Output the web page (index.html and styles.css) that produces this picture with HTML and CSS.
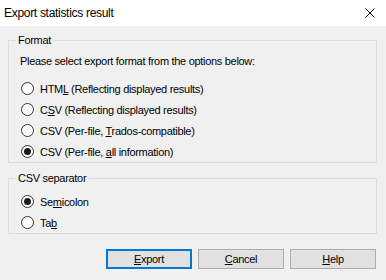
FILE: index.html
```html
<!DOCTYPE html>
<html lang="en">
<head>
    <meta charset="UTF-8">
    <title>Export statistics result</title>
    <link rel="stylesheet" href="styles.css">
</head>
<body>
    <div class="dialog">
        <div class="titlebar">
            <span class="title">Export statistics result</span>
            <svg class="close" width="10" height="10" viewBox="0 0 10 10">
                <path d="M0.5 0.5 L9.5 9.5 M9.5 0.5 L0.5 9.5" stroke="#000" stroke-width="1" fill="none"/>
            </svg>
        </div>

        <div class="content">
            <fieldset class="group format">
                <legend>Format</legend>
                <p class="hint">Please select export format from the options below:</p>
                <label class="option"><span class="radio"></span><span>HTM<u>L</u> (Reflecting displayed results)</span></label>
                <label class="option"><span class="radio"></span><span>C<u>S</u>V (Reflecting displayed results)</span></label>
                <label class="option"><span class="radio"></span><span>CSV (Per-file, <u>T</u>rados-compatible)</span></label>
                <label class="option"><span class="radio checked"></span><span>CSV (Per-file, <u>a</u>ll information)</span></label>
            </fieldset>

            <fieldset class="group separator">
                <legend>CSV separator</legend>
                <label class="option"><span class="radio checked"></span><span>Se<u>m</u>icolon</span></label>
                <label class="option"><span class="radio"></span><span>Ta<u>b</u></span></label>
            </fieldset>

            <div class="buttons">
                <button class="btn default"><u>E</u>xport</button>
                <button class="btn"><u>C</u>ancel</button>
                <button class="btn"><u>H</u>elp</button>
            </div>
        </div>
    </div>
</body>
</html>
```

FILE: styles.css
```css
body {
    margin: 0;
    font-family: "Liberation Sans", Arial, sans-serif;
    font-size: 11px;
    letter-spacing: -0.3px;
    color: #000;
    background: #f0f0f0;
}
.dialog {
    width: 386px;
    height: 280px;
    background: #f0f0f0;
}
.titlebar {
    height: 26px;
    background: #fff;
    display: flex;
    align-items: center;
    justify-content: space-between;
    padding: 0 11px 0 4px;
    box-sizing: border-box;
    font-size: 12px;
    letter-spacing: -0.3px;
}
.close {
    display: block;
}
.content {
    padding: 8px 9px 0 8px;
}
.group {
    margin: 0;
    padding: 0 11px;
    border: 1px solid #dcdcdc;
    min-width: 0;
}
.group legend {
    padding: 0 2px;
    margin-left: -4px;
    line-height: 13px;
}
.hint {
    margin: 8px 0 10px;
    line-height: 13px;
}
.option {
    display: flex;
    align-items: center;
    height: 21px;
    gap: 6px;
}
.radio {
    width: 11px;
    height: 11px;
    margin-left: 1px;
    border: 1px solid #333;
    border-radius: 50%;
    background: #fff;
    position: relative;
}
.radio.checked::after {
    content: "";
    position: absolute;
    left: 2px;
    top: 2px;
    width: 7px;
    height: 7px;
    border-radius: 50%;
    background: #1a1a1a;
}
.separator {
    margin-top: 9px;
}
.separator legend + .option {
    margin-top: 6px;
}
.buttons {
    display: flex;
    justify-content: flex-end;
    gap: 6px;
    margin-top: 15px;
    padding-right: 1px;
}
.btn {
    width: 86px;
    height: 20px;
    padding: 0;
    font-family: inherit;
    font-size: 11px;
    letter-spacing: -0.3px;
    color: #000;
    background: #e1e1e1;
    border: 1px solid #adadad;
}
.btn.default {
    border: 2px solid #0078d7;
}
```
